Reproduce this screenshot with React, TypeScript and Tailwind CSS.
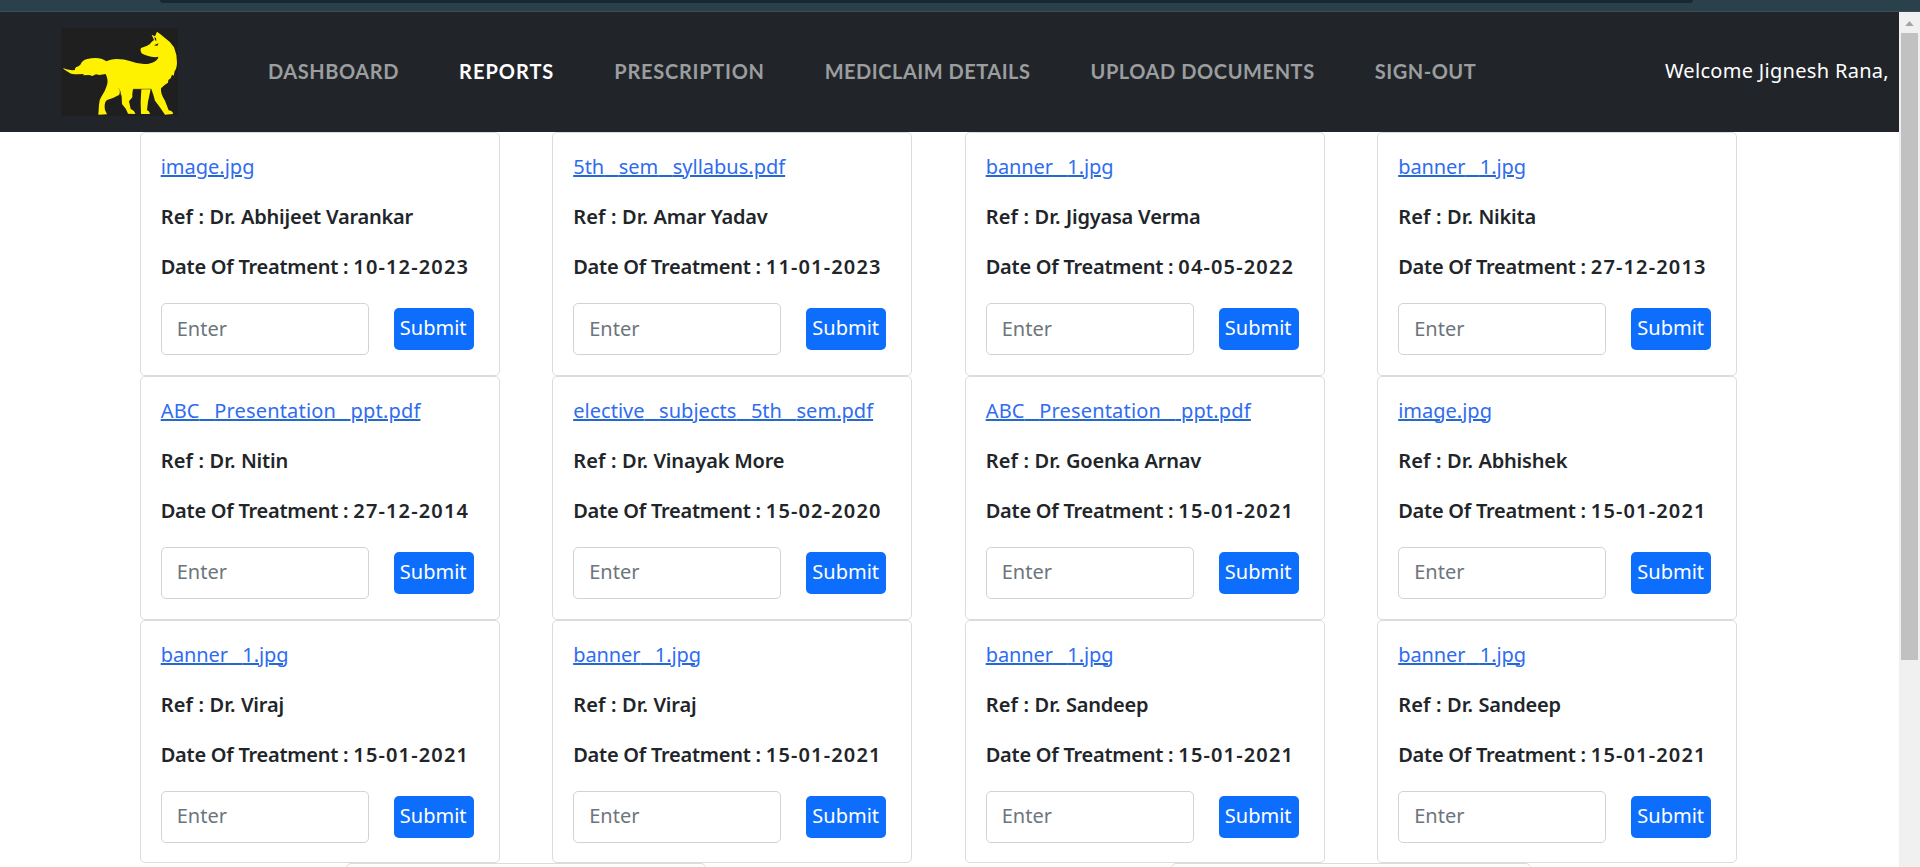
import { Fragment } from "react";

type Report = { file: string; doctor: string; date: string; tracking?: string };

const navItems = [
  { label: "DASHBOARD", tracking: "tracking-[0.57px]" },
  { label: "REPORTS", tracking: "tracking-[1px]", active: true },
  { label: "PRESCRIPTION", tracking: "tracking-[0.73px]" },
  { label: "MEDICLAIM DETAILS", tracking: "tracking-[0.5px]" },
  { label: "UPLOAD DOCUMENTS", tracking: "tracking-[0.58px]" },
  { label: "SIGN-OUT", tracking: "tracking-[0.53px]" },
];

const reports: Report[] = [
  { file: "image.jpg", doctor: "Abhijeet Varankar", date: "10-12-2023" },
  { file: "5th_sem_syllabus.pdf", doctor: "Amar Yadav", date: "11-01-2023" },
  { file: "banner_1.jpg", doctor: "Jigyasa Verma", date: "04-05-2022", tracking: "tracking-[-0.1px]" },
  { file: "banner_1.jpg", doctor: "Nikita", date: "27-12-2013", tracking: "tracking-[-0.1px]" },
  { file: "ABC_Presentation_ppt.pdf", doctor: "Nitin", date: "27-12-2014", tracking: "tracking-[0.18px]" },
  { file: "elective_subjects_5th_sem.pdf", doctor: "Vinayak More", date: "15-02-2020", tracking: "tracking-[0.03px]" },
  { file: "ABC_Presentation_ ppt.pdf", doctor: "Goenka Arnav", date: "15-01-2021", tracking: "tracking-[0.18px]" },
  { file: "image.jpg", doctor: "Abhishek", date: "15-01-2021" },
  { file: "banner_1.jpg", doctor: "Viraj", date: "15-01-2021", tracking: "tracking-[-0.1px]" },
  { file: "banner_1.jpg", doctor: "Viraj", date: "15-01-2021", tracking: "tracking-[-0.1px]" },
  { file: "banner_1.jpg", doctor: "Sandeep", date: "15-01-2021", tracking: "tracking-[-0.1px]" },
  { file: "banner_1.jpg", doctor: "Sandeep", date: "15-01-2021", tracking: "tracking-[-0.1px]" },
];

function Logo() {
  return (
    <svg viewBox="33 24 351 264" className="ml-[60.5px] mt-4 h-[88px] w-[117px] shrink-0 bg-[#1f1f1f]">
      <g fill="#fff200">
        <path d="M38 144 Q55 152 75 150 Q73 146 79 141 Q86 139 91 134 Q96 121 112 117 Q135 112 154 116 Q164 119 169 124 Q180 118 200 117 Q222 117 242 124 Q262 132 282 132 Q304 132 318 122 Q326 115 325 110 L316 112 Q304 110 292 107 Q274 102 273 96 Q270 90 273 84 Q290 80 299 73 Q304 65 312 60 L305 44 L315 49 L321 35 Q334 44 345 54 Q362 65 372 82 Q381 103 381 128 Q380 146 374 153 L371 167 L366 164 L362 175 L359 177 L355 180 L354 188 L347 193 L343 196 L333 205 Q331 222 345 242 L356 271 Q369 273 369 282 L345 284 Q330 261 315 242 Q310 223 304 207 L249 207 Q246 224 247 232 L237 244 L242 267 Q254 272 256 282 L234 281 Q230 267 216 252 L215 230 Q213 215 206 204 Q213 214 207 225 Q190 235 171 240 Q161 248 165 270 L171 283 L145 284 L147 255 Q147 239 154 230 Q165 215 170 198 Q177 182 167 162 L148 165 L138 163 L127 168 L118 165 L98 166 L103 162 L82 163 Q64 163 58 158 Q44 151 38 144 Z" />
        <path d="M274 208 L302 208 L294 245 L291 270 Q299 273 300 282 L273 282 L272 245 Z" />
      </g>
      <path d="M315 74 L326 70 L321 79 L318 76 L313 79 Z M313 51 L318 54 L319 64 L315 60 Z" fill="#1f1f1f" />
      <path d="M249 207 L304 206 M206 204 Q213 214 211 225" fill="none" stroke="#8f8a10" strokeWidth="1.5" />
    </svg>
  );
}

function FileLink({ name, tracking = "tracking-normal" }: { name: string; tracking?: string }) {
  const parts = name.split("_");
  return (
    <a
      href="#"
      className={`${tracking} whitespace-pre text-[#2f6cf0] underline decoration-[#2469cf] decoration-2 underline-offset-[1px]`}
    >
      {parts.map((part, i) => (
        <Fragment key={i}>
          {i > 0 && (
            <span className="tracking-[5.6px] text-transparent [text-decoration-skip-ink:none]">_</span>
          )}
          {part}
        </Fragment>
      ))}
    </a>
  );
}

function ReportCard({ file, doctor, date, tracking }: Report) {
  return (
    <article className="h-[243.8px] w-[360px] rounded-[5px] border border-[#dcdcdc] px-5 pt-[19px] leading-[30px]">
      <p className="mb-5">
        <FileLink name={file} tracking={tracking} />
      </p>
      <p className="mb-5 font-semibold tracking-[-0.2px]">
        <span className="tracking-[0.15px]">Ref : Dr. </span>
        {doctor}
      </p>
      <p className="font-semibold tracking-[1.15px]">
        <span className="tracking-[-0.25px]">Date Of Treatment : </span>
        {date}
      </p>
      <div className="mt-[21px] flex items-center gap-[25px]">
        <input
          type="text"
          placeholder="Enter"
          className="h-[52px] w-[208px] rounded-[5px] border border-[#ced4da] px-[15px] pb-0.5 placeholder:text-[#6c757d]"
        />
        <button className="h-[42px] w-20 rounded-[5px] bg-[#0d6efd] pr-[7px] pb-0.5 pl-[6px] text-white">Submit</button>
      </div>
    </article>
  );
}

export default function App() {
  return (
    <div className="flex h-[867px] w-[1920px] flex-col overflow-hidden bg-white font-['Noto_Sans',sans-serif] text-[20px] text-[#212529]">
      <div className="h-3 shrink-0 border-b border-[#3a4c55] bg-[#2a404a]">
        <div className="ml-[160px] h-[3px] w-[1533px] rounded-b-lg bg-[#162832]" />
      </div>
      <div className="flex min-h-0 grow">
        <div className="flex w-[1899px] shrink-0 flex-col">
          <nav className="flex h-[120px] shrink-0 bg-[#212529]">
            <Logo />
            <ul className="ml-[90.5px] mt-[44px] flex gap-[60px] font-['Lato',sans-serif] leading-[30px] font-bold">
              {navItems.map((item) => (
                <li
                  key={item.label}
                  className={`${item.tracking} whitespace-nowrap ${item.active ? "text-white" : "text-[#9b9d9f]"}`}
                >
                  {item.label}
                </li>
              ))}
            </ul>
            <span className="mt-[44px] mr-[10px] ml-auto leading-[30px] tracking-[0.3px] text-white">
              Welcome Jignesh Rana,
            </span>
          </nav>
          <main>
            <div className="ml-[139.7px] grid grid-cols-[repeat(4,412.5px)]">
              {reports.map((r, i) => (
                <ReportCard key={i} {...r} />
              ))}
            </div>
            <div className="ml-[346px] flex gap-[464.5px]">
              <div className="h-10 w-[360px] rounded-t-[5px] border border-[#dcdcdc]" />
              <div className="h-10 w-[360px] rounded-t-[5px] border border-[#dcdcdc]" />
            </div>
          </main>
        </div>
        <div className="flex grow flex-col items-center bg-[#f0f0f0]">
          <svg viewBox="0 0 10 6" className="mt-[9px] h-[5px] w-[9px]" fill="#a3a3a3">
            <path d="M0 6 L5 0 L10 6 Z" />
          </svg>
          <div className="mt-[7px] h-[627px] w-[17px] bg-[#c1c1c1]" />
        </div>
      </div>
    </div>
  );
}
